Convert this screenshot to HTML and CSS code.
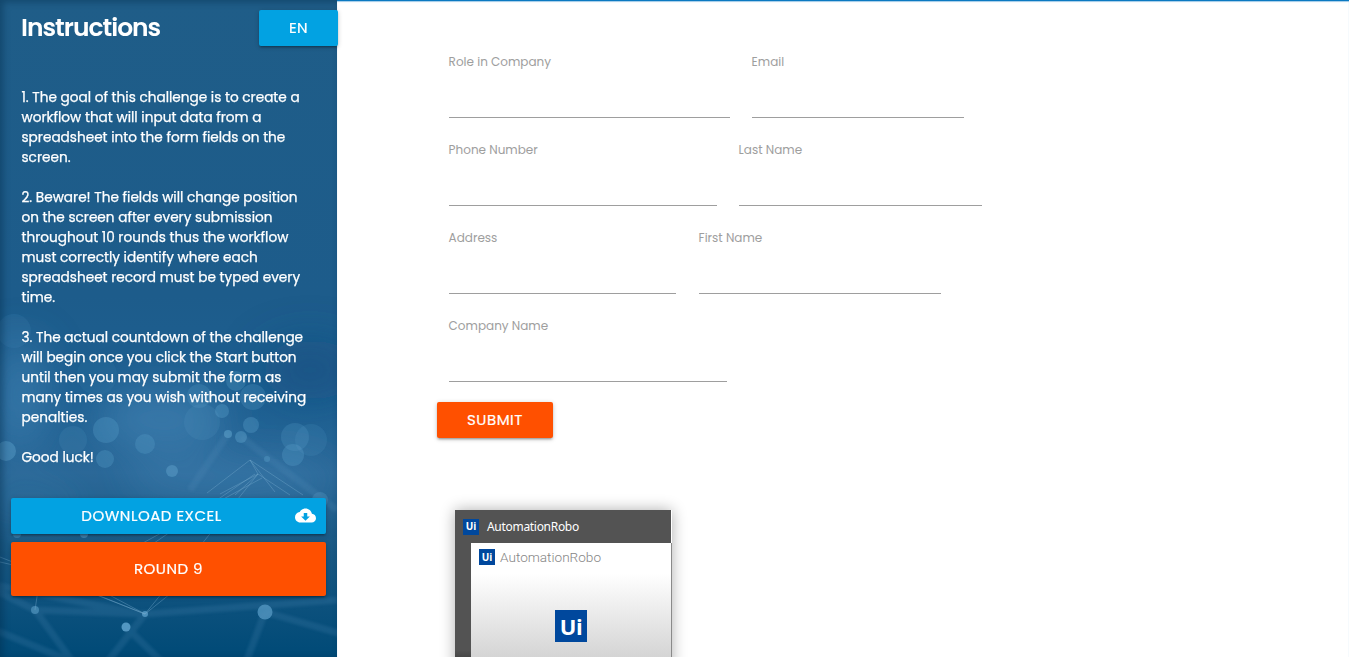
FILE: index.html
```html
<!DOCTYPE html>
<html lang="en">
<head>
<meta charset="utf-8">
<title>Challenge</title>
<link rel="stylesheet" href="styles.css">
</head>
<body>
<div class="app">
  <aside class="sidebar">
    <svg class="backdrop" width="337" height="657" viewBox="0 0 337 657" aria-hidden="true">
      <defs>
        <linearGradient id="base" x1="0" y1="0" x2="0" y2="1">
          <stop offset="0" stop-color="#1f5d88"/>
          <stop offset=".45" stop-color="#1d5c8b"/>
          <stop offset=".6" stop-color="#1d5f91"/>
          <stop offset=".72" stop-color="#296797"/>
          <stop offset=".84" stop-color="#195883"/>
          <stop offset="1" stop-color="#004a77"/>
        </linearGradient>
        <filter id="soft" x="-60%" y="-100%" width="220%" height="300%"><feGaussianBlur stdDeviation="20"/></filter>
        <filter id="haze"><feGaussianBlur stdDeviation="1.5"/></filter>
        <filter id="edge"><feGaussianBlur stdDeviation=".6"/></filter>
      </defs>
      <rect width="337" height="657" fill="url(#base)"/>
      <g filter="url(#soft)" fill="#4586b5">
        <ellipse cx="20" cy="395" rx="28" ry="55" opacity=".6"/>
        <ellipse cx="160" cy="418" rx="65" ry="32" opacity=".65"/>
        <ellipse cx="230" cy="480" rx="110" ry="24" opacity=".45"/>
        <ellipse cx="30" cy="500" rx="60" ry="20" opacity=".25"/>
        <ellipse cx="310" cy="370" rx="50" ry="30" fill="#0d4c7b" opacity=".5"/>
      </g>
      <g fill="#5ba0ca" filter="url(#edge)">
        <circle cx="14" cy="331" r="17" opacity=".12"/>
        <circle cx="97" cy="375" r="20" opacity=".08"/>
        <circle cx="236" cy="381" r="10" opacity=".28"/>
        <circle cx="253" cy="397" r="13" opacity=".25"/>
        <circle cx="199" cy="396" r="12" opacity=".22"/>
        <circle cx="222" cy="411" r="7" opacity=".35"/>
        <circle cx="202" cy="422" r="18" opacity=".15"/>
        <circle cx="251" cy="425" r="8" opacity=".35"/>
        <circle cx="106" cy="430" r="13" opacity=".32"/>
        <circle cx="73" cy="440" r="14" opacity=".15"/>
        <circle cx="145" cy="444" r="10" opacity=".3"/>
        <circle cx="228" cy="434" r="4" opacity=".6"/>
        <circle cx="241" cy="437" r="6" opacity=".45"/>
        <circle cx="295" cy="437" r="14" opacity=".23"/>
        <circle cx="311" cy="440" r="16" opacity=".14"/>
        <circle cx="293" cy="455" r="11" opacity=".32"/>
        <circle cx="6" cy="451" r="10" opacity=".45"/>
        <circle cx="105" cy="459" r="9" opacity=".32"/>
        <circle cx="172" cy="471" r="6" opacity=".5"/>
        <circle cx="267" cy="459" r="3" opacity=".4"/>
        <circle cx="320" cy="500" r="8" opacity=".3"/>
        <circle cx="17" cy="534" r="4" opacity=".4"/>
        <circle cx="84" cy="534" r="4" opacity=".5"/>
        <circle cx="35" cy="610" r="4" opacity=".6"/>
        <circle cx="145" cy="614" r="3" opacity=".8"/>
        <circle cx="126" cy="627" r="4.5" opacity=".9"/>
        <circle cx="265" cy="612" r="7.5" opacity=".7"/>
      </g>
      <g stroke="#5c94bf" stroke-width="7" opacity=".18" filter="url(#haze)" fill="none">
        <path d="M241 437L337 510M228 434L190 490"/>
        <path d="M-5 590L35 610L75 665M-5 630L80 665M35 610L145 614L337 600M145 614L105 665M126 627L165 665M265 612L245 665M-5 585L140 614M265 612L345 635"/>
      </g>
      <g stroke="#75a9ce" stroke-width="1" opacity=".4" fill="none">
        <path d="M250 460L207 493M250 460L275 492M250 460L303 495M250 460L258 474L220 494M258 474L235 495M258 474L290 495M255 474L100 580M262 478L130 550M258 474L205 540L145 614M0 557L145 614L85 590M145 614L175 590M145 614L100 590M0 562L35 570M35 610L38 590"/>
      </g>
    </svg>
    <div class="heading">
      <h1 class="title">Instructions</h1>
      <button class="btn lang">EN</button>
    </div>
    <div class="instructions">
      <p>1. The goal of this challenge is to create a<br>workflow that will input data from a<br>spreadsheet into the form fields on the<br>screen.</p>
      <p>2. Beware! The fields will change position<br>on the screen after every submission<br>throughout 10 rounds thus the workflow<br>must correctly identify where each<br>spreadsheet record must be typed every<br>time.</p>
      <p>3. The actual countdown of the challenge<br>will begin once you click the Start button<br>until then you may submit the form as<br>many times as you wish without receiving<br>penalties.</p>
      <p>Good luck!</p>
    </div>
    <div class="actions">
      <button class="btn download"><span class="caption">DOWNLOAD EXCEL</span>
        <svg class="cloud" width="21" height="21" viewBox="0 0 24 24"><path fill="#fff" d="M19.35 10.04C18.67 6.59 15.64 4 12 4 9.11 4 6.6 5.64 5.35 8.04 2.34 8.36 0 10.91 0 14c0 3.31 2.69 6 6 6h13c2.76 0 5-2.24 5-5 0-2.64-2.05-4.78-4.65-4.96zM17 13l-5 5-5-5h3V9h4v4h3z"/></svg>
      </button>
      <button class="btn round">ROUND 9</button>
    </div>
  </aside>
  <main class="main">
    <form class="form">
      <div class="row">
        <label class="field role"><span>Role in Company</span><input></label>
        <label class="field email"><span>Email</span><input></label>
      </div>
      <div class="row">
        <label class="field phone"><span>Phone Number</span><input></label>
        <label class="field last"><span>Last Name</span><input></label>
      </div>
      <div class="row">
        <label class="field address"><span>Address</span><input></label>
        <label class="field first"><span>First Name</span><input></label>
      </div>
      <div class="row">
        <label class="field company"><span>Company Name</span><input></label>
      </div>
      <button type="button" class="btn submit">SUBMIT</button>
    </form>
    <div class="preview">
      <div class="preview-bar"><span class="ui small">Ui</span><span class="preview-name">AutomationRobo</span></div>
      <div class="window">
        <div class="window-bar"><span class="ui small">Ui</span><span class="window-name">AutomationRobo</span></div>
        <div class="window-body"><span class="ui large">Ui</span></div>
      </div>
    </div>
  </main>
</div>
</body>
</html>
```
FILE: styles.css
```css
* { box-sizing: border-box; }
body { margin: 0; overflow: hidden; background: #fff; font-family: Poppins, Inter, "Open Sans", sans-serif; }
.app { display: flex; width: 1349px; height: 657px; overflow: hidden; }
.sidebar { position: relative; z-index: 1; width: 337px; flex: none; color: #fff; }
.sidebar > * { position: relative; }
.sidebar > .backdrop { position: absolute; top: 0; left: 0; }
.sidebar::before { content: ""; position: absolute; z-index: 1; inset: 0; box-shadow: inset 3px 2px 7px rgba(0, 40, 70, .42); pointer-events: none; }
.heading { display: flex; justify-content: space-between; padding: 10px 0 0 21px; width: 338px; height: 87px; z-index: 2; }
.title { margin: 0; font-size: 25px; font-weight: 600; line-height: 36px; letter-spacing: -1px; }
.btn { display: flex; align-items: center; justify-content: center; border: 0; border-radius: 2px; padding: 0 0 1px; color: #fff; font: 400 15px Poppins, Inter, sans-serif; letter-spacing: .5px; -webkit-text-stroke: .2px #fff; box-shadow: 0 2px 2px rgba(0, 0, 0, .14), 0 3px 1px -2px rgba(0, 0, 0, .12), 0 1px 5px rgba(0, 0, 0, .2); }
.lang { width: 79px; height: 36px; background: #02a2e2; }
.instructions { padding: 1px 0 0 21.5px; height: 411px; font-size: 13.65px; font-weight: 400; line-height: 20px; white-space: nowrap; -webkit-text-stroke: .25px #fff; }
.instructions p { margin: 0 0 20px; }
.actions { display: flex; flex-direction: column; gap: 8px; padding-left: 11px; }
.download { width: 315px; height: 36px; background: #02a2e2; }
.caption { flex: 1; padding-right: 3px; text-align: center; }
.cloud { margin-right: 10px; }
.round { width: 315px; height: 54px; background: #ff5000; }
.main { flex: 1; border-top: 1px solid #0b79c1; box-shadow: inset 0 1px 1px #9fcae8; padding: 51px 0 0 100px; }
.form { height: 458px; }
.row { display: flex; gap: 22px; height: 88px; padding-left: 12px; }
.field { display: block; height: 66px; color: #9e9e9e; font-size: 12px; line-height: 20px; white-space: nowrap; }
.field span { display: block; height: 20px; margin-left: -.4px; }
.field input { display: block; width: 100%; height: 46px; padding: 0; border: 0; border-bottom: 1px solid #9e9e9e; outline: 0; background: transparent; }
.role { width: 281px; }
.email { width: 212px; }
.phone { width: 268px; }
.last { width: 243px; }
.address { width: 227px; }
.first { width: 242px; margin-left: 1px; }
.company { width: 278px; }
.submit { width: 116px; height: 36px; margin-top: -2px; background: #ff5000; }
.preview { width: 217px; height: 160px; margin-left: 18px; background: linear-gradient(#535353 140px, #303030 160px); background-size: 216px 100%; background-repeat: no-repeat; box-shadow: 0 0 14px rgba(0, 0, 0, .32); }
.preview-bar { display: flex; align-items: center; gap: 8px; height: 33px; padding-left: 8px; background: #535353; color: #fff; width: 216px; }
.preview-name { padding-bottom: 1px; font: 12px "Noto Sans", sans-serif; letter-spacing: -.3px; }
.ui { display: flex; align-items: center; justify-content: center; flex: none; background: #00489d; color: #fff; font-family: "Open Sans", sans-serif; font-weight: 700; }
.small { width: 16px; height: 16px; padding-bottom: 1px; font-size: 10px; }
.large { width: 32px; height: 32px; padding-bottom: 1px; font-size: 22px; letter-spacing: -.5px; }
.window { width: 201px; height: 127px; margin-left: 16px; border-right: 1px solid #8a8a8a; background: linear-gradient(#fff 30px, #d3d3d3 117px); }
.window-bar { display: flex; gap: 5px; align-items: center; height: 28px; padding-left: 8px; color: #858585; }
.window-name { font: 300 13.6px Roboto, sans-serif; }
.window-body { display: flex; justify-content: center; padding-top: 39px; }
```
